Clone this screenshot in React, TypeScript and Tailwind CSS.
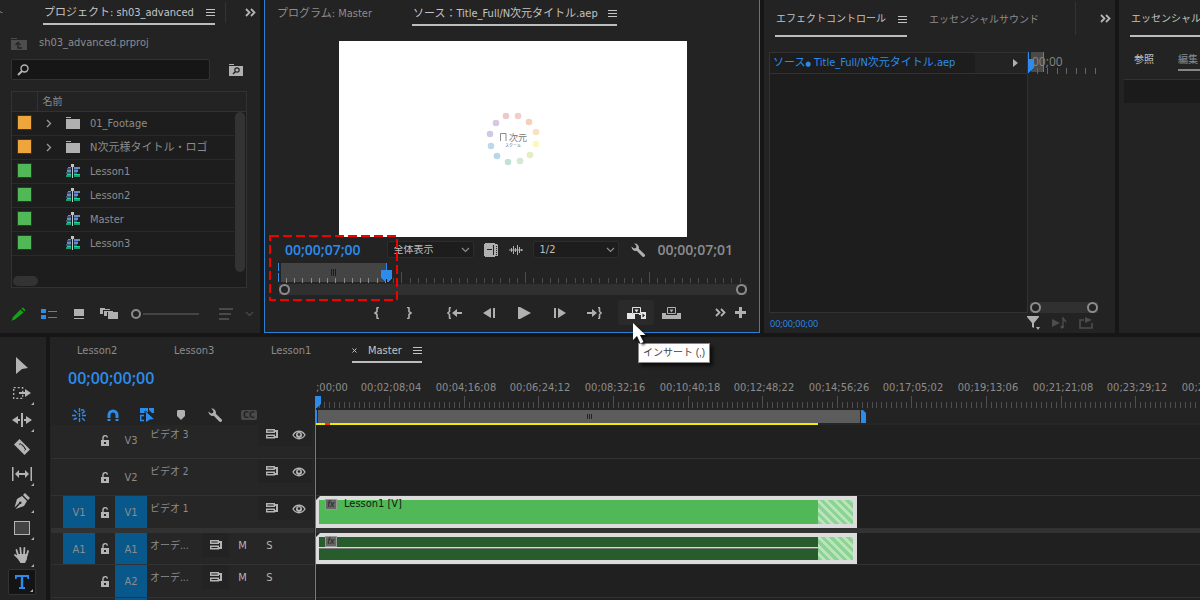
import type { ReactNode } from 'react';

interface IconProps {
  w: number;
  h: number;
  className?: string;
  children: ReactNode;
}

function Icon({ w, h, className = '', children }: IconProps) {
  return (
    <svg
      width={w}
      height={h}
      viewBox={`0 0 ${w} ${h}`}
      fill="currentColor"
      aria-hidden="true"
      className={`block shrink-0 ${className}`}
    >
      {children}
    </svg>
  );
}

const MenuIcon = () => (
  <Icon w={9} h={9} className="text-[#c4c4c4]">
    <path d="M0 1h9v1H0zM0 4h9v1H0zM0 7h9v1H0z" />
  </Icon>
);

const MoreIcon = () => (
  <Icon w={11} h={9} className="text-[#b4b4b4]">
    <path d="M1 1l3.5 3.5L1 8M6 1l3.5 3.5L6 8" fill="none" stroke="currentColor" strokeWidth="1.8" />
  </Icon>
);

const ChevronDown = ({ className = '' }: { className?: string }) => (
  <Icon w={9} h={6} className={className}>
    <path d="M1 1l3.5 3.5L8 1" fill="none" stroke="currentColor" strokeWidth="1.2" />
  </Icon>
);

const FolderIcon = () => (
  <Icon w={14} h={12} className="text-[#b0b0b0]">
    <path d="M0 0h5v1H0zM0 2h14v10H0z" />
  </Icon>
);

const SequenceIcon = () => (
  <Icon w={14} h={14}>
    <path d="M2 3h3v2H2zM1 6h4v2H1zM8 3h6v2H8zM8 6h4v2H8z" fill="#6b8cc0" />
    <path d="M1 4h4v2H1zM8 5h4v1H8zM0 8h5v2H0zM8 8h3v2H8z" fill="#3f5678" />
    <path d="M1 10h4v1H1zM8 10h6v1H8z" fill="#22d896" />
    <path d="M0 11h5v2H0zM8 11h6v2H8z" fill="#1c9a72" />
    <path d="M5 0h3v3H7v11H6V3H5z" fill="#c4c4c4" />
  </Icon>
);

const WrenchIcon = () => (
  <Icon w={14} h={14} className="text-[#b0b0b0]">
    <path d="M3.2.5a4.2 4.2 0 0 1 4.6 5.2l5.7 5.6a1.5 1.5 0 0 1-2.2 2.2L5.7 7.8A4.2 4.2 0 0 1 .5 3.6L3 5.6l2-.6.5-2z" />
  </Icon>
);

const LockIcon = () => (
  <Icon w={9} h={11} className="text-[#b4b4b4]">
    <path d="M2 5V3.2a2.2 2.2 0 0 1 4.4-.6" fill="none" stroke="currentColor" strokeWidth="1.4" />
    <path fillRule="evenodd" d="M0 5h8v6H0zM3 7v2h2V7z" />
  </Icon>
);

const SyncIcon = () => (
  <Icon w={12} h={10} className="text-[#b4b4b4]">
    <path d="M.7.7h7.6v2.6H.7zM.7 6.200h7.6v2.600H.7z" fill="none" stroke="currentColor" strokeWidth="1.4" />
    <path d="M8 1h4v8H8V7h2V3H8z" />
  </Icon>
);

const EyeIcon = () => (
  <Icon w={14} h={10} className="text-[#b4b4b4]">
    <path d="M1 5c3-5 9-5 12 0-3 5-9 5-12 0z" fill="none" stroke="currentColor" strokeWidth="1.3" />
    <circle cx="7" cy="5" r="3" />
    <circle cx="7" cy="4.5" r="1.3" fill="#232323" />
  </Icon>
);

const bins = [
  { name: '01_Footage', folder: true },
  { name: 'N次元様タイトル・ロゴ', folder: true },
  { name: 'Lesson1', folder: false },
  { name: 'Lesson2', folder: false },
  { name: 'Master', folder: false },
  { name: 'Lesson3', folder: false },
];

function ProjectPanel() {
  return (
    <section className="flex min-w-0 flex-col bg-[#232323]">
      <div className="flex h-[25px] items-stretch">
        <span className="w-1 shrink-0 overflow-hidden pt-1.5 text-[10px] [direction:rtl]">ト</span>
        <button className="ml-[39px] flex items-center gap-3 whitespace-nowrap border-b-2 border-[#bdbdbd] pl-px pt-0.5 text-[#c4c4c4]">
          プロジェクト: sh03_advanced
          <MenuIcon />
        </button>
        <span className="my-0.5 ml-2.5 w-px shrink-0 bg-[#333]" />
        <button className="ml-auto mr-1 flex items-center" aria-label="その他のパネル">
          <MoreIcon />
        </button>
      </div>

      <div className="flex h-[34px] items-center gap-3 px-[11px]">
        <Icon w={16} h={12} className="mt-1 text-[#4d4d4d]">
          <path d="M0 0h6v1H0zM0 2h16v10H0z" />
          <path d="M11 10H7V6M4.500 7L7 4.500 9.500 7" stroke="#232323" strokeWidth="1.3" fill="none" />
        </Icon>
        <span className="pt-0.5">sh03_advanced.prproj</span>
      </div>

      <div className="flex items-center gap-[19px] pl-[11px] pr-[17px]">
        <label className="flex h-[21px] min-w-0 flex-1 items-center rounded-xs border border-[#323232] bg-[#161616] px-[5px]">
          <Icon w={12} h={12} className="text-[#b4b4b4]">
            <circle cx="7.500" cy="4.500" r="3.500" fill="none" stroke="currentColor" strokeWidth="1.400" />
            <path d="M5 7L1 11" stroke="currentColor" strokeWidth="2" />
          </Icon>
          <input type="text" aria-label="検索" className="ml-1 w-full min-w-0 bg-transparent outline-none" />
        </label>
        <button aria-label="検索ビン">
          <Icon w={14} h={12} className="text-[#b0b0b0]">
            <path d="M0 0h5v1H0zM0 2h14v10H0z" />
            <circle cx="8" cy="6" r="2.200" fill="none" stroke="#232323" strokeWidth="1.200" />
            <path d="M6.500 7.500L4 10" stroke="#232323" strokeWidth="1.400" />
          </Icon>
        </button>
      </div>

      <div className="relative ml-[11px] mr-[13px] mt-[11px] border border-[#323232] bg-[#1d1d1d] pb-[31px]">
        <table className="w-full table-fixed border-collapse text-left">
          <thead>
            <tr className="h-[19px] border-b border-[#323232] bg-[#232323]">
              <th className="w-[25px] border-r border-[#323232]" />
              <th className="pl-[5px] pt-0.5 text-[10px] font-normal leading-none">名前</th>
              <th className="w-3" />
            </tr>
          </thead>
          <tbody>
            {bins.map((bin) => (
              <tr key={bin.name} className="h-6">
                <td className="border-b border-[#2a2a2a] p-0 pb-px">
                  <span
                    className={`ml-[5px] block size-[15px] border border-[#343434] ${
                      bin.folder ? 'bg-[#eda53c]' : 'bg-[#51b858]'
                    }`}
                  />
                </td>
                <td className="border-b border-[#2a2a2a] p-0">
                  <div className="flex items-center whitespace-nowrap">
                    <span className="flex w-6 shrink-0 justify-center">
                      {bin.folder && (
                        <Icon w={6} h={9} className="text-[#9a9a9a]">
                          <path d="M1 1l3.500 3.500L1 8" fill="none" stroke="currentColor" strokeWidth="1.300" />
                        </Icon>
                      )}
                    </span>
                    <span className="ml-[5px] mr-2.5 w-3.5">{bin.folder ? <FolderIcon /> : <SequenceIcon />}</span>
                    <span className="pt-0.5">{bin.name}</span>
                  </div>
                </td>
                <td />
              </tr>
            ))}
          </tbody>
        </table>
        <span className="absolute right-px top-5 h-40 w-2.5 rounded-full bg-[#333]" />
        <span className="absolute bottom-px left-px h-2.5 w-[25px] rounded-full bg-[#333]" />
      </div>

      <div className="mt-2 flex flex-1 items-center pb-px pl-[11px] pr-2">
        <button aria-label="書き込み可能">
          <Icon w={15} h={14} className="text-[#15a015]">
            <path d="M10.500 1.500L12 .5 14.500 3l-1 1.500zM9.500 2.500l3 3L4 12.500l-3.500 1.300L2 10z" />
          </Icon>
        </button>
        <button aria-label="リスト表示" className="ml-[15px]">
          <Icon w={16} h={10} className="text-[#2d8ceb]">
            <path d="M0 0h5v4H0zM0 6h5v4H0zM7 2h9v1H7zM7 8h9v1H7z" />
          </Icon>
        </button>
        <button aria-label="アイコン表示" className="ml-[17px]">
          <Icon w={10} h={10} className="text-[#b0b0b0]">
            <path d="M0 0h10v7H0zM0 9h10v1H0z" />
          </Icon>
        </button>
        <button aria-label="フリーフォーム表示" className="ml-4">
          <Icon w={18} h={11} className="text-[#b0b0b0]">
            <path d="M0 0h5v1h5v1H3v4H0zM4 3h9v1H7v4H4zM8 4h10v7H8z" />
          </Icon>
        </button>
        <span className="ml-[13px] flex items-center">
          <span className="size-2.5 rounded-full border-2 border-[#8c8c8c]" />
          <span className="ml-0.5 h-0.5 w-14 bg-[#444]" />
        </span>
        <button aria-label="並べ替え" className="ml-5 flex items-center gap-3 text-[#4a4a4a]">
          <Icon w={14} h={12}>
            <path d="M0 0h14v2H0zM0 5h12v2H0zM0 10h10v2H0z" />
          </Icon>
          <ChevronDown />
        </button>
      </div>
    </section>
  );
}

// logo ring, clockwise from the top left
const ringDots = [
  [46, 21, '#efc8cb'],
  [58, 21, '#f2cdcb'],
  [69, 27, '#f4d0bd'],
  [76, 37, '#f9e2c0'],
  [76, 49, '#fbf8bd'],
  [70, 60, '#e4eec3'],
  [60, 66, '#d3e9d2'],
  [48, 67, '#c3e1d8'],
  [37, 61, '#b7d8e8'],
  [31, 51, '#bdd8ea'],
  [30, 39, '#cccbe6'],
  [36, 28, '#d8c8e2'],
] as const;

const sourceTicks = Array.from({ length: 57 }, (_, i) => ({
  x: Math.floor(i * 8.25),
  major: i % 15 === 0,
}));

function SourceRuler() {
  return (
    <svg width="100%" height="20" aria-hidden="true" className="block overflow-hidden" shapeRendering="crispEdges">
      <rect x="3" y="0" width="106" height="19" fill="#444" />
      {sourceTicks.slice(1).map(({ x, major }) => (
        <rect
          key={x}
          x={x}
          y={major ? 9 : 15}
          width="1"
          height={major ? 11 : 5}
          fill={x < 109 ? '#8a8a8a' : '#4c4c4c'}
        />
      ))}
      <path d="M53 6h1v7h-1zM55 6h1v7h-1zM57 6h1v7h-1z" fill="#1b1b1b" />
      <path d="M0 0h1v8H0zM0 10h1v9H0zM108 0h1v8h-1z" fill="#2d8ceb" />
      <path d="M103 7h11v8l-4 4h-3l-4-4z" fill="#2d8ceb" />
      <path d="M108 16h1v3h-1z" fill="#111" />
    </svg>
  );
}

function Select({ label, value, className }: { label: string; value: string; className: string }) {
  return (
    <span className={`relative flex h-[17px] items-center ${className}`}>
      <select
        aria-label={label}
        defaultValue={value}
        className="h-full w-full appearance-none rounded-xs border border-[#2c2c2c] bg-[#1d1d1d] pl-1.5 leading-none text-[#bdbdbd]"
      >
        <option>{value}</option>
      </select>
      <ChevronDown className="pointer-events-none absolute right-1 text-[#8c8c8c]" />
    </span>
  );
}

function SourceMonitor() {
  return (
    <section className="relative z-10 flex min-w-0 flex-col border-x border-b border-[#2d7fd2] bg-[#232323]">
      <div className="flex h-[26px] whitespace-nowrap pl-3">
        <button className="pt-0.5">プログラム: Master</button>
        <button className="ml-10 flex items-center gap-2.5 border-b-2 border-[#bdbdbd] pl-px pt-[3px] text-[#c4c4c4]">
          ソース：Title_Full/N次元タイトル.aep
          <MenuIcon />
        </button>
      </div>

      <div className="mt-[15px] flex justify-center pl-0.5">
        <div className="flex h-[196px] w-[348px] justify-center bg-white pl-1">
          <svg width="110" height="85" viewBox="0 0 110 85" className="mt-[54px]" aria-label="N次元">
            {ringDots.map(([x, y, fill]) => (
              <circle key={`${x}-${y}`} cx={x} cy={y} r="3.300" fill={fill} />
            ))}
            <path d="M40.500 46v-7.500h5.500v7.500" fill="none" stroke="#8c8c8c" />
            <text x="49" y="46" fontSize="9" fill="#777">次元</text>
            <text x="45" y="52" fontSize="4" fill="#666">スクール</text>
          </svg>
        </div>
      </div>

      <div className="flex h-[26px] items-center whitespace-nowrap pb-px pl-5 pr-[26px]">
        <span className="font-['Open_Sans',sans-serif] text-sm font-semibold text-[#2d8ceb]">00;00;07;00</span>
        <Select label="ズームレベル" value="全体表示" className="ml-[26px] w-[87px] text-[10px]" />
        <button aria-label="ビデオのみドラッグ" className="ml-2.5">
          <Icon w={14} h={14} className="text-[#b0b0b0]">
            <path d="M0 1h1V0h10v1h2l1 1v11h-3v1H1v-1H0z" />
            <path d="M3 6.500h5M9.500 2v10" stroke="#232323" fill="none" />
            <path d="M12.500 3v10" stroke="#232323" strokeDasharray="1 1" />
          </Icon>
        </button>
        <button aria-label="オーディオのみドラッグ" className="ml-[11px]">
          <Icon w={14} h={10} className="text-[#b0b0b0]">
            <path d="M0 5h14M2.500 3v4M4.500 1v8M6.500 3v4M8.500 0v10M10.500 2v6M12.500 4v2" stroke="currentColor" />
          </Icon>
        </button>
        <Select label="再生時の解像度" value="1/2" className="ml-2.5 w-[86px]" />
        <button aria-label="設定" className="ml-3">
          <WrenchIcon />
        </button>
        <span className="ml-auto font-['Open_Sans',sans-serif] text-sm font-semibold text-[#8c8c8c]">00;00;07;01</span>
      </div>

      <div className="ml-[13px] mr-2">
        <SourceRuler />
        <div className="ml-px mr-1 mt-px flex h-[11px] justify-between bg-[#303030]">
          <span className="size-[11px] rounded-full border-2 border-[#8c8c8c] bg-[#232323]" />
          <span className="size-[11px] rounded-full border-2 border-[#8c8c8c] bg-[#232323]" />
        </div>
      </div>

      <div className="mb-[7px] mt-[5px] flex h-[25px] items-stretch pl-24 pr-[9px] text-[#b0b0b0] [&_button]:flex [&_button]:items-center [&_button]:justify-center">
        <button className="w-8" aria-label="インをマーク">
          <Icon w={6} h={12}>
            <path d="M5 .5H4q-1 0-1 1V4.500L1 6l2 1.500v3q0 1 1 1h1" fill="none" stroke="currentColor" strokeWidth="1.600" />
          </Icon>
        </button>
        <button className="w-8" aria-label="アウトをマーク">
          <Icon w={6} h={12}>
            <path d="M1 .5h1q1 0 1 1V4.500L5 6 3 7.500v3q0 1-1 1H1" fill="none" stroke="currentColor" strokeWidth="1.600" />
          </Icon>
        </button>
        <button className="ml-3 w-[35px]" aria-label="インへ移動">
          <Icon w={15} h={12}>
            <path d="M4 .5H3.500q-1 0-1 1V4.500L.8 6l1.700 1.500v3q0 1 1 1H4" fill="none" stroke="currentColor" strokeWidth="1.600" />
            <path d="M5 6l5-4v3h5v2h-5v3z" />
          </Icon>
        </button>
        <button className="w-[35px]" aria-label="1フレーム前へ戻る">
          <Icon w={13} h={10}>
            <path d="M8 0v10L0 5zM10 0h2v10h-2z" />
          </Icon>
        </button>
        <button className="w-[35px]" aria-label="再生">
          <Icon w={13} h={12}>
            <path d="M0 0h2l11 6-11 6H0z" />
          </Icon>
        </button>
        <button className="w-[35px]" aria-label="1フレーム先へ進む">
          <Icon w={13} h={10}>
            <path d="M5 0l8 5-8 5zM1 0h2v10H1z" />
          </Icon>
        </button>
        <button className="w-[35px]" aria-label="アウトへ移動">
          <Icon w={15} h={12}>
            <path d="M11 .5h.5q1 0 1 1V4.500L14.200 6l-1.700 1.500v3q0 1-1 1H11" fill="none" stroke="currentColor" strokeWidth="1.600" />
            <path d="M10 6L5 2v3H0v2h5v3z" />
          </Icon>
        </button>
        <button className="relative ml-1.5 w-9 rounded-xs bg-[#2a2a2a] text-[#e6e6e6]" aria-describedby="insert-tip">
          <Icon w={19} h={12}>
            <path d="M5.500.5h8v6h-8z" fill="none" stroke="currentColor" />
            <path d="M7.500 2.500h4l-2 3zM0 6h5v1h3v5H0zM12 7h2V5h5v7h-5V8h-2z" />
            <path d="M15.500 6.500v4L18 8.500z" fill="#232323" />
          </Icon>
          {/* pointer and tooltip hover over the button and the panel below */}
          <svg width="18" height="26" viewBox="0 0 18 26" className="absolute left-3.5 top-[22px] z-10 drop-shadow-[2px_2px_1px_rgba(0,0,0,0.7)]">
            <path d="M1 1v17l4-4 3.500 7.500 3-1.400L8 13h5.500z" fill="#fff" />
          </svg>
          <span
            id="insert-tip"
            role="tooltip"
            className="absolute left-5 top-[43px] flex h-5 w-[72px] items-center justify-center whitespace-nowrap border border-[#888] bg-white font-['Liberation_Sans','Noto_Sans_CJK_JP',sans-serif] text-[10px] leading-none text-[#444] shadow-[3px_3px_3px_rgba(0,0,0,0.6)]"
          >
            インサート (,)
          </span>
        </button>
        <button className="w-[35px]" aria-label="上書き">
          <Icon w={19} h={12}>
            <path d="M5.500.5h8v6h-8z" fill="none" stroke="currentColor" />
            <path d="M7.500 2.500h4l-2 3zM0 6h4v2h11V6h4v6H0z" />
          </Icon>
        </button>
        <button className="ml-auto w-5" aria-label="その他">
          <MoreIcon />
        </button>
        <button className="w-5" aria-label="ボタンエディター">
          <Icon w={11} h={11}>
            <path d="M4 0h3v4h4v3H7v4H4V7H0V4h4z" />
          </Icon>
        </button>
      </div>

      <svg width="130" height="68" className="pointer-events-none absolute left-1 top-[234px]" aria-hidden="true">
        <rect x="1" y="2" width="127" height="64" fill="none" stroke="#f40000" strokeWidth="2" strokeDasharray="9 4" />
      </svg>
    </section>
  );
}

function EffectControls() {
  return (
    <section className="flex min-w-0 flex-col overflow-hidden bg-[#232323]">
      <div className="flex h-[37px] whitespace-nowrap pl-[11px] text-[10px]">
        <button className="flex items-center gap-3 border-b-2 border-[#bdbdbd] pl-px pt-[3px] text-[#c4c4c4]">
          エフェクトコントロール
          <MenuIcon />
        </button>
        <button className="ml-[22px] pt-0.5">エッセンシャルサウンド</button>
        <span className="mb-0.5 ml-auto mt-0.5 w-px bg-[#333]" />
        <button className="ml-6 mr-1 flex items-center" aria-label="その他のパネル">
          <MoreIcon />
        </button>
      </div>

      <div className="mt-[15px] flex h-[261px]">
        <div className="ml-[5px] flex min-w-0 flex-1 flex-col border border-[#323232] bg-[#1d1d1d]">
          <div className="flex h-[21px] items-center border-b border-[#323232] whitespace-nowrap">
            <span className="w-[205px] pl-[3px] pt-px text-[#2d8ceb]">
              ソース<span className="text-[7px]">●</span> Title_Full/N次元タイトル.aep
            </span>
            <span className="flex h-full flex-1 items-center justify-end bg-[#232323] pr-[9px] text-[#b0b0b0]">
              <Icon w={5} h={8}>
                <path d="M0 0l5 4-5 4z" />
              </Icon>
            </span>
          </div>
        </div>
        <div className="flex w-[87px] shrink-0 flex-col justify-between">
          <svg width="87" height="22" className="block" shapeRendering="crispEdges">
            <rect x="3" width="12" height="20" fill="#4a4a4a" />
            <text x="4" y="14" fontSize="12" fill="#858585" className="font-['Open_Sans',sans-serif]">00;00</text>
            <path d="M9 16h1v6H9zM19 16h1v6h-1zM29 16h1v6h-1zM38 16h1v6h-1zM48 16h1v6h-1zM57 16h1v6h-1zM67 16h1v6h-1z" fill="#666" />
            <path d="M0 0h1v21H0zM15 0h1v20h-1z" fill="#2d8ceb" />
            <path d="M0 7h6v8l-4 5H0z" fill="#2d8ceb" />
          </svg>
          <div className="ml-0.5 mr-[17px] flex h-[11px] justify-between bg-[#303030]">
            <span className="size-[11px] rounded-full border-2 border-[#8c8c8c] bg-[#232323]" />
            <span className="size-[11px] rounded-full border-2 border-[#8c8c8c] bg-[#232323]" />
          </div>
        </div>
      </div>

      <div className="flex h-5 items-center pl-1.5 pr-[22px] text-[#4d4d4d]">
        <span className="flex-1 font-['Open_Sans',sans-serif] text-[9px] font-medium leading-none text-[#2d8ceb]">00;00;00;00</span>
        <button aria-label="フィルター">
          <Icon w={13} h={14} className="text-[#b0b0b0]">
            <path d="M0 0h12v1L7 7v5l-2-1V7L0 1zM9 11h4l-2 3z" />
          </Icon>
        </button>
        <button aria-label="オーディオ再生" className="ml-3">
          <Icon w={15} h={12}>
            <path d="M0 2l8 4-8 4z" />
            <path d="M11 11V1l3 4" fill="none" stroke="currentColor" strokeWidth="1.400" />
            <circle cx="10" cy="10" r="1.500" />
          </Icon>
        </button>
        <button aria-label="ループ" className="ml-3">
          <Icon w={14} h={12}>
            <path d="M5 3H1v8h12V6" fill="none" stroke="currentColor" strokeWidth="1.600" />
            <path d="M6 0l7 3-7 3z" />
          </Icon>
        </button>
      </div>
    </section>
  );
}

function EssentialGraphics() {
  return (
    <section className="min-w-0 overflow-hidden whitespace-nowrap bg-[#232323] pl-[5px] text-[10px]">
      <button className="ml-1.5 block h-[37px] border-b-2 border-[#bdbdbd] pl-px pr-5 pt-[3px] text-[#c4c4c4]">エッセンシャルグラフィックス</button>
      <div className="mt-3 flex gap-6 pl-2.5">
        <button className="h-[22px] border-b-2 border-transparent pt-0.5 text-[#c4c4c4]">参照</button>
        <button className="h-[22px] border-b-2 border-[#858585] pr-4 pt-0.5">編集</button>
      </div>
      <div className="mt-2 h-6 border-t border-[#323232] bg-[#1b1b1b]" />
    </section>
  );
}

const Corner = () => (
  <svg width="3" height="3" className="absolute bottom-0.5 right-0.5" aria-hidden="true">
    <path d="M3 0v3H0z" fill="#b0b0b0" />
  </svg>
);

const tools = [
  {
    name: '選択ツール',
    more: false,
    art: (
      <Icon w={12} h={17}>
        <path d="M0 0l12 11-6 1-6 5z" />
      </Icon>
    ),
  },
  {
    name: 'トラックの前方選択ツール',
    more: true,
    art: (
      <Icon w={18} h={12}>
        <path d="M.7.700h9v10.600h-9z" fill="none" stroke="currentColor" strokeWidth="1.300" strokeDasharray="2 2" />
        <path d="M6 5h6V2l6 4-6 4V7H6z" />
      </Icon>
    ),
  },
  {
    name: 'リップルツール',
    more: true,
    art: (
      <Icon w={20} h={14}>
        <path d="M9 0h2v14H9zM0 7l6-4v3h2v2H6v3zM20 7l-6-4v3h-2v2h2v3z" />
      </Icon>
    ),
  },
  {
    name: 'レーザーツール',
    more: false,
    art: (
      <Icon w={16} h={16}>
        <path d="M5.500 0L16 10.500 10.500 16 0 5.500z" />
        <path d="M5 5.500l1.500-1 1 1.500 1.500 0 0 1.500 1.500.5 0 1.500 1.500.5-1.500 1.500" fill="none" stroke="#232323" />
      </Icon>
    ),
  },
  {
    name: 'スリップツール',
    more: true,
    art: (
      <Icon w={20} h={14}>
        <path d="M0 0h1.500v14H0zM18.500 0H20v14h-1.500zM3 7l4-4v3h6V3l4 4-4 4V8H7v3z" />
      </Icon>
    ),
  },
  {
    name: 'ペンツール',
    more: true,
    art: (
      <Icon w={16} h={16}>
        <path d="M11 0l5 5-2 2-5-5zM8 3l5 5-3 5-8.500 3L6 11a1.300 1.300 0 1 0-1-1L.5 14.500 3 6z" />
      </Icon>
    ),
  },
  {
    name: '長方形ツール',
    more: true,
    art: (
      <Icon w={16} h={14}>
        <rect x=".5" y=".5" width="15" height="13" fill="#444" stroke="currentColor" />
      </Icon>
    ),
  },
  {
    name: '手のひらツール',
    more: true,
    art: (
      <Icon w={16} h={16}>
        <path d="M4 8L2.500 3M7 8L6.300 1M10 8l.4-7M12.500 9L14 4M4.500 11L1 8" fill="none" stroke="currentColor" strokeWidth="1.800" strokeLinecap="round" />
        <path d="M3.200 7h10.200l-.6 5.500L11 16H6.500L2.500 10z" />
      </Icon>
    ),
  },
];

function Toolbar() {
  return (
    <nav className="flex w-[46px] shrink-0 flex-col bg-[#232323] pl-2 pt-4 text-[#b4b4b4]">
      {tools.map((tool) => (
        <button key={tool.name} aria-label={tool.name} className="relative flex h-[27px] w-7 items-center justify-center pb-0.5">
          {tool.art}
          {tool.more && <Corner />}
        </button>
      ))}
      <button
        aria-label="横書き文字ツール"
        className="relative flex h-[26px] w-7 items-center justify-center rounded-xs border border-[#333] bg-[#141414] text-[#2d8ceb]"
      >
        <Icon w={14} h={14}>
          <path d="M0 0h14v4h-1.500L12 2H8.200v10H10v2H4v-2h1.800V2H2l-.5 2H0z" />
        </Icon>
        <Corner />
      </button>
    </nav>
  );
}

const timeLabels = [
  '00;02;08;04',
  '00;04;16;08',
  '00;06;24;12',
  '00;08;32;16',
  '00;10;40;18',
  '00;12;48;22',
  '00;14;56;26',
  '00;17;05;02',
  '00;19;13;06',
  '00;21;21;08',
  '00;23;29;12',
  '00;25;37;16',
];
const MAJOR_STEP = 74.6;

function TimeRuler() {
  return (
    <svg width="100%" height="29" className="block overflow-hidden">
      <g fontSize="11" fill="#8c8c8c">
        <text x="1" y="12">;00;00</text>
        {timeLabels.map((label, i) => (
          <text key={label} x={Math.floor((i + 1) * MAJOR_STEP) + 2} y="12" textAnchor="middle">
            {label}
          </text>
        ))}
      </g>
      <g shapeRendering="crispEdges" fill="#4f4f4f">
        {Array.from({ length: 181 }, (_, i) => (
          <rect
            key={i}
            x={Math.floor((i * MAJOR_STEP) / 15)}
            y={i % 15 === 0 ? 17 : 23}
            width="1"
            height={i % 15 === 0 ? 12 : 6}
          />
        ))}
      </g>
      <path d="M0 17h6v8l-4 4H0z" fill="#2d8ceb" />
    </svg>
  );
}

interface Track {
  id: string;
  name: string;
  height: string;
  source?: boolean;
  target?: boolean;
}

const videoTracks: Track[] = [
  { id: 'V3', name: 'ビデオ 3', height: 'h-[34px]' },
  { id: 'V2', name: 'ビデオ 2', height: 'h-[37px]' },
  { id: 'V1', name: 'ビデオ 1', height: 'h-8', source: true, target: true },
];

const audioTracks: Track[] = [
  { id: 'A1', name: 'オーデ...', height: 'h-8', source: true, target: true },
  { id: 'A2', name: 'オーデ...', height: 'h-[33px]', target: true },
];

function TrackHeader({ track, audio }: { track: Track; audio?: boolean }) {
  const patch = 'flex w-8 items-center justify-center pt-0.5';
  return (
    <div
      className={`flex shrink-0 flex-col justify-end overflow-hidden bg-[#262626] ${track.height} ${
        track.id === 'V1' ? '' : 'border-b border-[#323232]'
      }`}
    >
      <div className={`flex shrink-0 pl-3 ${track.source || audio ? 'h-full' : 'h-9'}`}>
        <button aria-label={`ソース ${track.id}`} className={`${patch} ${track.source ? 'bg-[#08588c]' : ''}`}>
          {track.source && track.id}
        </button>
        <button aria-label="ロック" className="flex w-5 items-center justify-center">
          <LockIcon />
        </button>
        <button className={`${patch} ${track.target ? 'bg-[#08588c]' : ''}`}>{track.id}</button>
        <span className={`shrink-0 pl-[3px] pt-[7px] text-[10px] leading-[11px] ${audio ? 'w-[55px]' : 'flex-1'}`}>
          {track.name}
        </span>
        <div className="flex h-6 items-center pr-0.5 [&>button]:flex [&>button]:h-full [&>button]:w-[27px] [&>button]:items-center [&>button]:justify-center">
          <button aria-label="同期ロック" className="bg-[#232323]">
            <SyncIcon />
          </button>
          {audio ? (
            <>
              <button className="pt-0.5 text-[#b4b4b4]">M</button>
              <button className="pt-0.5 text-[#b4b4b4]">S</button>
            </>
          ) : (
            <button aria-label="トラック出力の切り替え" className="bg-[#232323] pt-px">
              <EyeIcon />
            </button>
          )}
        </div>
      </div>
    </div>
  );
}

function Clip({ name, audio }: { name?: string; audio?: boolean }) {
  return (
    <div
      className={`relative flex h-full w-[541px] border-y-4 border-l-[3px] border-r-4 border-[#dcdcdc] ${
        audio ? 'bg-[#295c2d]' : 'bg-[#51b858]'
      }`}
    >
      <svg width="5" height="5" className="absolute -left-[3px] -top-1" aria-hidden="true">
        <path d="M0 4L4 0H0z" fill="#222" />
      </svg>
      <span className="ml-1.5 mt-[-1px] flex h-[11px] w-3 items-center justify-center border border-[#999] bg-[#666] font-['Liberation_Sans',sans-serif] text-[9px] italic leading-none text-[#222]">
        fx
      </span>
      {name && <span className="-mt-1 ml-[7px] leading-[15px] text-[#0d1f0e]">{name}</span>}
      {audio && <span className="absolute left-0 right-[35px] top-2.5 h-0.5 border-b border-[#777] bg-[#dcdcdc]" />}
      <span className="relative ml-auto w-[35px] bg-[repeating-linear-gradient(45deg,#8cd491_0_3px,#bbe4be_3px_6px)]" />
    </div>
  );
}

const sequences = ['Lesson2', 'Lesson3', 'Lesson1'];

function Timeline() {
  return (
    <section className="flex min-w-0 flex-1 flex-col overflow-hidden bg-[#232323]">
      <div className="flex h-[26px] pl-[27px]">
        {sequences.map((name) => (
          <button key={name} className="w-[97px] pt-0.5 text-left">
            {name}
          </button>
        ))}
        <button className="-ml-4 flex items-center gap-[11px] border-b-2 border-[#bdbdbd] pt-[3px] text-[#c4c4c4]">
          <Icon w={5} h={5}>
            <path d="M.5.5l4 4M4.500.5l-4 4" stroke="currentColor" />
          </Icon>
          <span>Master</span>
          <MenuIcon />
        </button>
      </div>

      <div className="flex flex-1">
        <div className="flex w-[265px] shrink-0 flex-col">
          <div className="flex h-[62px] flex-col">
            <span className="flex h-[30px] items-center pl-[18px] font-['Open_Sans',sans-serif] text-base font-semibold leading-none text-[#2d8ceb]">
              00;00;00;00
            </span>
            <div className="flex pl-3 pt-3.5 text-[#2d8ceb] [&>button]:flex [&>button]:h-4 [&>button]:w-[34px] [&>button]:items-center [&>button]:justify-center">
              <button aria-label="ネストとして挿入">
                <Icon w={15} h={14}>
                  <path d="M7.500 0v14M0 7.500h5M10 7.500h5M2 2l4 4M13 3L9.500 6M1.500 11.500L5 10M10 10l3 3M9 2h3" fill="none" stroke="currentColor" strokeWidth="1.400" strokeDasharray="4 1" />
                </Icon>
              </button>
              <button aria-label="スナップ">
                <Icon w={12} h={12}>
                  <path d="M2 12V6a4 4 0 0 1 8 0v6" fill="none" stroke="currentColor" strokeWidth="3" />
                  <path d="M0 9.500h12" stroke="#232323" />
                </Icon>
              </button>
              <button aria-label="リンクされた選択">
                <Icon w={14} h={14}>
                  <path d="M0 0h8v5H0zM9 0h5v5h-2L9 2zM6 3l8 8-4 .5L6 14z" />
                  <path d="M4 7.500H.700v5H4" fill="none" stroke="currentColor" strokeWidth="1.400" />
                  <path d="M5 3v10M5.500 3l8 7" fill="none" stroke="#232323" />
                </Icon>
              </button>
              <button aria-label="マーカーを追加">
                <Icon w={8} h={10} className="text-[#b0b0b0]">
                  <path d="M1 0h6l1 1v5L4 10 0 6V1z" />
                </Icon>
              </button>
              <button aria-label="タイムライン表示設定">
                <WrenchIcon />
              </button>
              <button aria-label="キャプション">
                <span className="flex h-2.5 w-4 items-center justify-center rounded-xs bg-[#4a4a4a] text-[9px] font-bold leading-none text-[#232323]">
                  CC
                </span>
              </button>
            </div>
          </div>
          <div className="ml-px mr-px flex flex-1 flex-col">
            {videoTracks.map((track) => (
              <TrackHeader key={track.id} track={track} />
            ))}
            <div className="h-[5px] bg-[#323232]" />
            {audioTracks.map((track) => (
              <TrackHeader key={track.id} track={track} audio />
            ))}
            <div className="flex flex-1 bg-[#262626] pl-16">
              <span className="w-8 bg-[#08588c]" />
            </div>
          </div>
        </div>

        <div className="flex min-w-0 flex-1 flex-col">
          <div className="h-[45px] pt-4">
            <TimeRuler />
          </div>
          <div className="flex flex-1 flex-col border-l border-[#2d8ceb]">
            <div className="mt-0.5 flex h-[13px]">
              <span className="w-px bg-[#2d8ceb]" />
              <span className="ml-px flex w-[542px] items-center justify-center gap-px bg-[#5c5c5c]">
                <span className="h-[5px] w-px bg-[#222]" />
                <span className="h-[5px] w-px bg-[#222]" />
                <span className="h-[5px] w-px bg-[#222]" />
              </span>
              <Icon w={6} h={13} className="ml-px text-[#2d8ceb]">
                <path d="M0 0h2l3 3v10H0z" />
              </Icon>
            </div>
            <div className="flex h-0.5 shrink-0 bg-[#262626]">
              <span className="w-[9px] bg-[#f2ea00]" />
              <span className="w-[5px] bg-[#f03010]" />
              <span className="w-[488px] bg-[#f2ea00]" />
            </div>
            <div className="h-[34px] border-b border-[#323232] bg-[#202020]" />
            <div className="h-[37px] border-b border-[#323232] bg-[#202020]" />
            <div className="h-8 bg-[#202020]">
              <Clip name="Lesson1 [V]" />
            </div>
            <div className="h-[5px] bg-[#323232]" />
            <div className="h-8 border-b border-[#323232] bg-[#202020]">
              <Clip audio />
            </div>
            <div className="h-[33px] border-b border-[#323232] bg-[#202020]" />
            <div className="flex-1 bg-[#202020]" />
          </div>
        </div>
      </div>
    </section>
  );
}

export default function App() {
  return (
    <main className="flex min-h-screen flex-col gap-1 overflow-hidden bg-[#161616] font-['DejaVu_Sans_Condensed','Noto_Sans_CJK_JP',sans-serif] text-[11px] leading-[14px] text-[#8c8c8c]">
      <div className="grid grid-cols-[minmax(0,260fr)_minmax(0,496fr)_minmax(0,351fr)_minmax(0,81fr)] gap-1">
        <ProjectPanel />
        <SourceMonitor />
        <EffectControls />
        <EssentialGraphics />
      </div>
      <div className="flex flex-1 gap-1">
        <Toolbar />
        <Timeline />
      </div>
    </main>
  );
}
